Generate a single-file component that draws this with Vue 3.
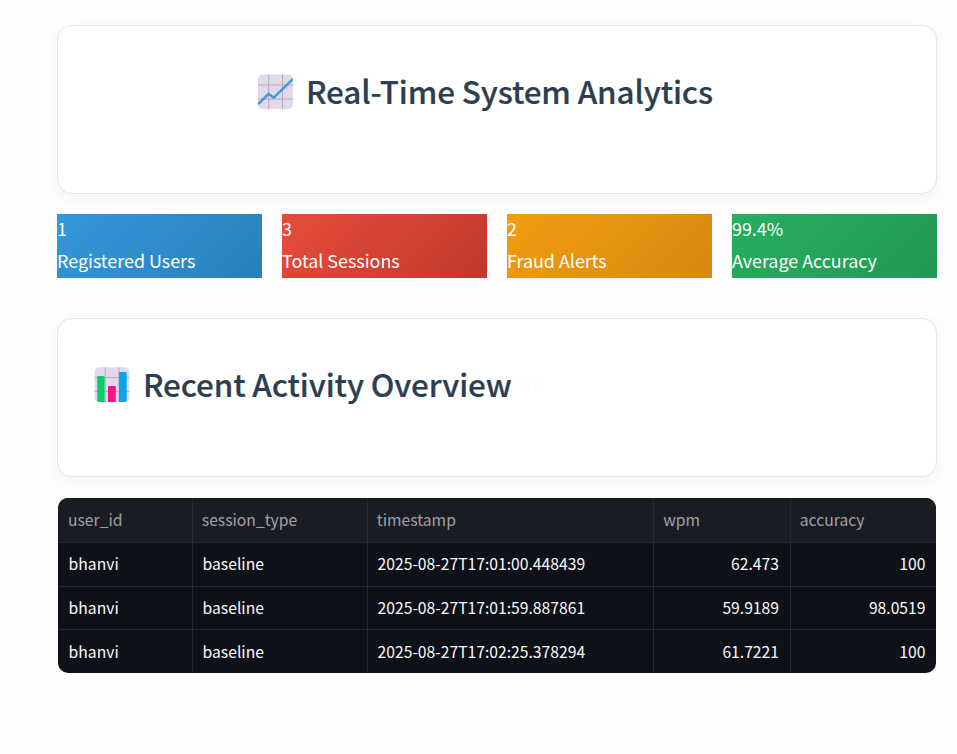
<script setup>
const stats = [
  { value: '1', label: 'Registered Users', tone: 'blue' },
  { value: '3', label: 'Total Sessions', tone: 'red' },
  { value: '2', label: 'Fraud Alerts', tone: 'orange' },
  { value: '99.4%', label: 'Average Accuracy', tone: 'green' },
]
const columns = ['user_id', 'session_type', 'timestamp', 'wpm', 'accuracy']
const rows = [
  ['bhanvi', 'baseline', '2025-08-27T17:01:00.448439', '62.473', '100'],
  ['bhanvi', 'baseline', '2025-08-27T17:01:59.887861', '59.9189', '98.0519'],
  ['bhanvi', 'baseline', '2025-08-27T17:02:25.378294', '61.7221', '100'],
]
</script>

<template>
  <main class="page">
    <section class="card hero">
      <svg class="emoji" viewBox="0 0 36 36" aria-hidden="true">
        <rect x="1" y="0.5" width="35" height="34.5" rx="4.5" fill="#e1d8ec" />
        <path d="M11.7 .5v34.5M25.5 .5v34.5M1 11h35M1 25h35" stroke="#b9a8b9" stroke-width="1" fill="none" />
        <path d="M1.2 30.2 11.6 19.8l5.2 3.8L35.8 5" stroke="#3d9bdc" stroke-width="2.4" fill="none" />
      </svg>
      <h1>Real-Time System Analytics</h1>
    </section>

    <section class="stats">
      <div v-for="s in stats" :key="s.label" class="stat" :class="s.tone">
        <div>{{ s.value }}</div>
        <div>{{ s.label }}</div>
      </div>
    </section>

    <section class="card recent">
      <svg class="emoji" viewBox="0 0 36 36" aria-hidden="true">
        <rect x="0.8" y="0.3" width="34.5" height="34.7" rx="4.5" fill="#e1d8ec" />
        <path d="M11.2 .3v34.7M25 .3v34.7M.8 10.5h34.5M.8 24.5h34.5" stroke="#b9a8b9" stroke-width="1" fill="none" />
        <path d="M3.2 10.2q0-1.2 1.2-1.2h5q1.2 0 1.2 1.2v24.8H5q-1.8 0-1.8-1.8z" fill="#0acb70" />
        <path d="M14 20.2q0-1.2 1.2-1.2h5.4q1.2 0 1.2 1.2v14.8H14z" fill="#f8128c" />
        <path d="M25 6.3q0-1.2 1.2-1.2h5.3q1.2 0 1.2 1.2v26.9q0 1.8-1.8 1.8H25z" fill="#08a5ec" />
      </svg>
      <h1>Recent Activity Overview</h1>
      <svg class="link" viewBox="0 0 24 12" aria-hidden="true">
        <path d="M10 2H6a4 4 0 0 0 0 8h4M14 2h4a4 4 0 0 1 0 8h-4M8 6h8" fill="none" stroke="#fafafa" stroke-width="1.8" />
      </svg>
    </section>

    <section class="table">
      <div class="row head">
        <div v-for="c in columns" :key="c" class="cell"><span>{{ c }}</span></div>
      </div>
      <div v-for="(r, i) in rows" :key="i" class="row">
        <div v-for="(v, j) in r" :key="j" class="cell" :class="{ num: j > 2 }"><span>{{ v }}</span></div>
      </div>
    </section>
  </main>
</template>

<style>
body {
  margin: 0;
  background: #fefefe;
}
</style>

<style scoped>
.page {
  box-sizing: border-box;
  width: 957px;
  height: 754px;
  padding: 25px 20px 0 57px;
  font-family: "Source Sans Pro", "Noto Sans CJK SC", sans-serif;
}
.card {
  box-sizing: border-box;
  display: flex;
  align-items: flex-start;
  border: 1px solid #e1e8ed;
  border-radius: 15px;
  background: #fff;
  box-shadow: 0 4px 15px rgba(0, 0, 0, 0.05);
}
.hero {
  height: 169px;
  padding: 48px 0 0 199px;
}
.recent {
  height: 159px;
  margin-top: 40px;
  padding: 48px 0 0 36px;
}
.emoji {
  width: 36px;
  height: 36px;
}
h1 {
  margin: -5px 0 0 13px;
  color: #2c3e50;
  font-size: 31.4px;
  font-weight: 500;
  letter-spacing: -0.13px;
  line-height: 44px;
  white-space: nowrap;
  -webkit-text-stroke: 0.2px #2c3e50;
}
.link {
  width: 22px;
  height: 11px;
  margin: 15px 0 0 9px;
}
.stats {
  display: grid;
  grid-template-columns: repeat(4, 205px);
  gap: 20px;
  margin-top: 20px;
}
.stat {
  display: flow-root;
  box-sizing: border-box;
  height: 64px;
  color: #fff;
  font-size: 17.9px;
  line-height: 32px;
  white-space: nowrap;
}
.stat div {
  margin-top: -2px;
  padding-bottom: 2px;
}
.blue { background: linear-gradient(135deg, #3498db, #2980b9); }
.red { background: linear-gradient(135deg, #e74c3c, #c0392b); }
.orange { background: linear-gradient(135deg, #f39c12, #d68910); }
.green { background: linear-gradient(135deg, #27ae60, #229954); }
.table {
  width: 878px;
  height: 175px;
  margin: 21px 0 0 1px;
  overflow: hidden;
  border-radius: 10px;
  background: #0e1117;
}
.row {
  box-sizing: border-box;
  display: grid;
  grid-template-columns: 135px 175px 286.4px 136.6px 145px;
  height: 43.6px;
  border-bottom: 1px solid #262930;
  color: #fafafa;
  font-size: 15.7px;
  line-height: 42px;
}
.row:last-child {
  border-bottom: 0;
  line-height: 43.5px;
}
.head {
  height: 45px;
  background: #1a1c24;
  color: #a0a1a5;
  line-height: 43px;
}
.cell {
  padding: 0 11px 0 9.6px;
  border-right: 1px solid #262930;
  white-space: nowrap;
}
.cell:first-child {
  padding-left: 10.6px;
}
.head .cell {
  padding-left: 8.8px;
}
.head .cell:first-child {
  padding-left: 10px;
}
.cell:last-child {
  padding-right: 10.5px;
  border-right: 0;
}
.num {
  text-align: right;
}
</style>
